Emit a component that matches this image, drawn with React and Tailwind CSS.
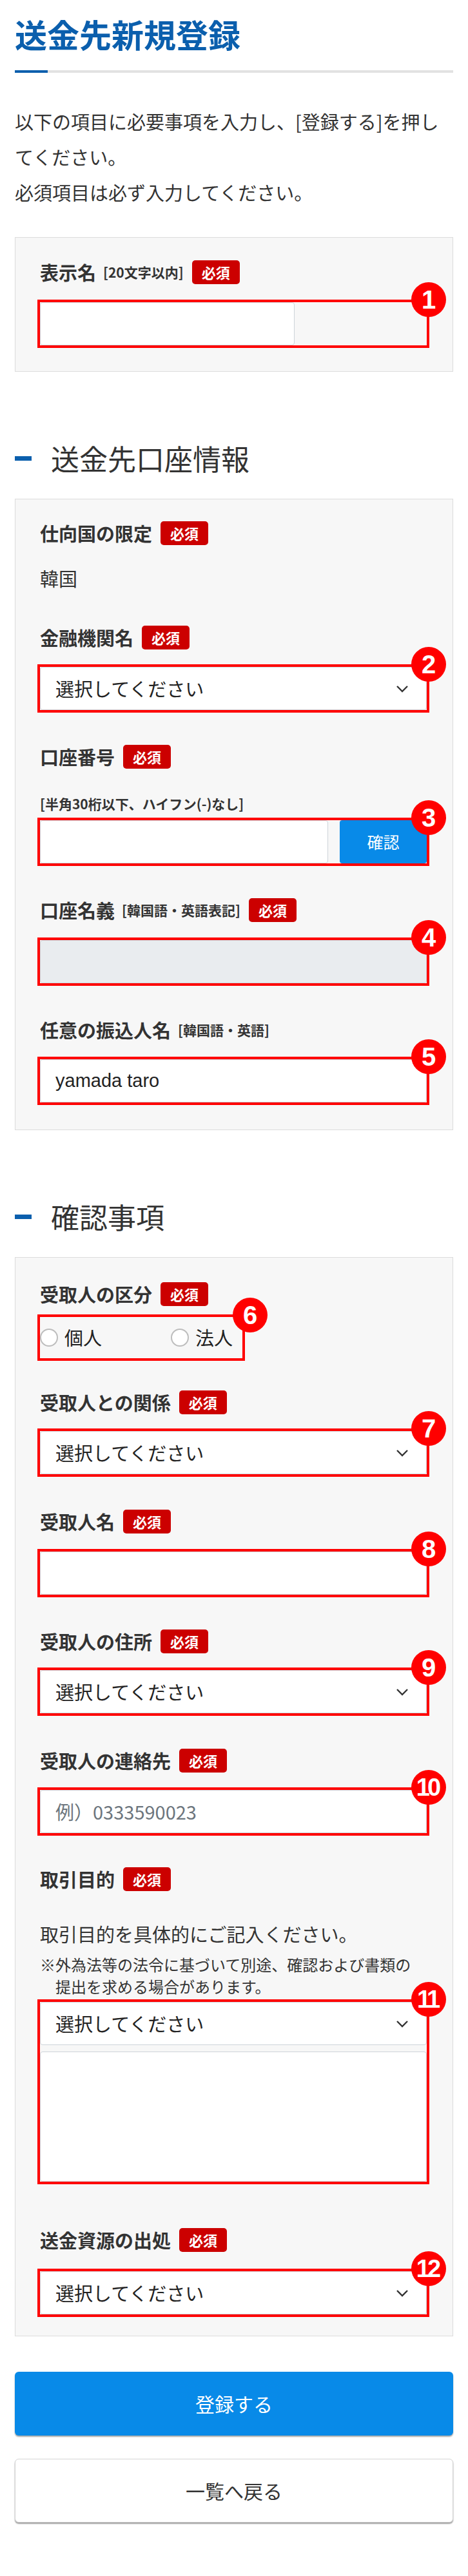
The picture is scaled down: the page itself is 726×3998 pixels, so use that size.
import React from 'react';

const BLUE = 'bg-[#0b5fad]';

const Badge = () => (
  <span className="ml-[13px] inline-flex h-[37px] w-[74px] items-center justify-center rounded-[5px] bg-[#cc0000] text-[22px] font-bold leading-none text-white">
    必須
  </span>
);

const Label = ({ children, note, required }) => (
  <div className="flex h-[40px] items-center text-[29px] font-bold leading-none text-[#333]">
    <span>{children}</span>
    {note && <span className="ml-[11px] text-[21px]">{note}</span>}
    {required && <Badge />}
  </div>
);

// red frame + numbered circle laid over a field
const Marked = ({ n, className = '', circle = '-right-[30px] -top-[31px]', children }) => (
  <div className={`relative ${className}`}>
    {children}
    <div className="pointer-events-none absolute -inset-[4px] border-[4px] border-[#ff0000]" />
    <span
      className={`absolute ${circle} flex h-[54px] w-[54px] items-center justify-center rounded-full bg-[#ff0000] font-['Liberation_Sans',sans-serif] font-bold leading-none text-white ${
        n > 9 ? 'text-[38px] tracking-[-4px] pr-[4px]' : 'text-[40px]'
      }`}
    >
      {n}
    </span>
  </div>
);

const Input = ({ value, placeholder, disabled, className = 'w-full' }) => (
  <div
    className={`flex h-[67px] items-center rounded-[4px] border border-[#ced4da] pl-[23px] text-[29px] ${
      disabled ? 'bg-[#e9ecef]' : 'bg-white'
    } ${className}`}
  >
    {value && <span className="font-['Liberation_Sans',sans-serif] text-[#222]">{value}</span>}
    {placeholder && <span className="text-[#6c757d]">{placeholder}</span>}
  </div>
);

const Select = () => (
  <div className="flex h-[67px] w-full items-center justify-between rounded-[4px] border border-[#ced4da] bg-white pl-[23px] pr-[27px] text-[29px] text-[#222]">
    <span>選択してください</span>
    <svg width="20" height="12" viewBox="0 0 20 12" fill="none">
      <path d="M2 2L10 10L18 2" stroke="#333" strokeWidth="2.4" />
    </svg>
  </div>
);

const Heading = ({ children }) => (
  <div className="mt-[104px] mb-[33px] flex h-[60px] items-center">
    <span className={`h-[7px] w-[26px] ${BLUE}`} />
    <h2 className="ml-[30px] text-[44px] font-normal leading-[60px] text-[#333]">{children}</h2>
  </div>
);

const Box = ({ className = '', children }) => (
  <div className={`border border-[#dcdcdc] bg-[#f7f7f7] pl-[38px] pr-[40px] ${className}`}>{children}</div>
);

const Radio = ({ label, className = '' }) => (
  <div className={`flex items-center ${className}`}>
    <span className="h-[28px] w-[28px] rounded-full border-2 border-[#bdbdbd] bg-white" />
    <span className="ml-[10px] text-[29px] text-[#222]">{label}</span>
  </div>
);

export default function App() {
  return (
    <div className="min-h-[3998px] bg-white px-[23px] pt-[22px] font-['Noto_Sans_CJK_JP','Noto_Sans',sans-serif] text-[#333]">
      <h1 className="text-[50px] font-bold leading-[60px] text-[#0b5fad]">送金先新規登録</h1>
      <div className="mt-[27px] flex h-[4px]">
        <div className={`w-[51px] ${BLUE}`} />
        <div className="flex-1 bg-[#e2e2e2]" />
      </div>

      <div className="mt-[48px] text-[29px] leading-[55px] text-[#333]">
        <p>
          以下の項目に必要事項を入力し、[登録する]を押し
          <br />
          てください。
        </p>
        <p>必須項目は必ず入力してください。</p>
      </div>

      <Box className="mt-[42px] pt-[33px] pb-[40px]">
        <Label note="[20文字以内]" required>表示名</Label>
        <Marked n={1} className="mt-[27px]">
          <Input className="w-[395px]" />
        </Marked>
      </Box>

      <Heading>送金先口座情報</Heading>
      <Box className="pt-[32px] pb-[42px]">
        <Label required>仕向国の限定</Label>
        <p className="mt-[30px] text-[29px] leading-[40px] text-[#333]">韓国</p>

        <div className="mt-[52px]">
          <Label required>金融機関名</Label>
          <Marked n={2} className="mt-[26px]">
            <Select />
          </Marked>
        </div>

        <div className="mt-[52px]">
          <Label required>口座番号</Label>
          <p className="mt-[39px] text-[21px] font-bold leading-[28px] text-[#333]">[半角30桁以下、ハイフン(-)なし]</p>
          <Marked n={3} className="mt-[12px]">
            <div className="flex gap-[18px]">
              <Input className="flex-1" />
              <button className="h-[67px] w-[135px] rounded-[4px] bg-[#088ae8] text-[25px] text-white">確認</button>
            </div>
          </Marked>
        </div>

        <div className="mt-[52px]">
          <Label note="[韓国語・英語表記]" required>口座名義</Label>
          <Marked n={4} className="mt-[27px]">
            <Input disabled />
          </Marked>
        </div>

        <div className="mt-[52px]">
          <Label note="[韓国語・英語]">任意の振込人名</Label>
          <Marked n={5} className="mt-[26px]">
            <Input value="yamada taro" />
          </Marked>
        </div>
      </Box>

      <Heading>確認事項</Heading>
      <Box className="pt-[36px] pb-[33px]">
        <Label required>受取人の区分</Label>
        <Marked n={6} className="mt-[16px] w-[314px]" circle="-right-[39px] -top-[30px]">
          <div className="flex h-[64px] items-center">
            <Radio label="個人" className="w-[203px]" />
            <Radio label="法人" />
          </div>
        </Marked>

        <div className="mt-[48px]">
          <Label required>受取人との関係</Label>
          <Marked n={7} className="mt-[25px]">
            <Select />
          </Marked>
        </div>

        <div className="mt-[53px]">
          <Label required>受取人名</Label>
          <Marked n={8} className="mt-[27px]">
            <Input />
          </Marked>
        </div>

        <div className="mt-[52px]">
          <Label required>受取人の住所</Label>
          <Marked n={9} className="mt-[25px]">
            <Select />
          </Marked>
        </div>

        <div className="mt-[53px]">
          <Label required>受取人の連絡先</Label>
          <Marked n={10} className="mt-[26px]">
            <Input placeholder="例）0333590023" />
          </Marked>
        </div>

        <div className="mt-[51px]">
          <Label required>取引目的</Label>
          <p className="mt-[45px] text-[29px] leading-[40px] text-[#333]">取引目的を具体的にご記入ください。</p>
          <p className="mt-[11px] pl-[24px] -indent-[24px] text-[24px] leading-[34px] text-[#333]">
            ※外為法等の法令に基づいて別途、確認および書類の
            <br />
            提出を求める場合があります。
          </p>
          <Marked n={11} className="mt-[7px]">
            <Select />
            <div className="mt-[10px] h-[202px] rounded-[4px] border border-[#ced4da] bg-white" />
          </Marked>
        </div>

        <div className="mt-[70px]">
          <Label required>送金資源の出処</Label>
          <Marked n={12} className="mt-[29px]">
            <Select />
          </Marked>
        </div>
      </Box>

      <button className="mt-[55px] flex h-[99px] w-full items-center justify-center rounded-[6px] bg-[#088ae8] text-[30px] text-white shadow-[0_2px_2px_rgba(0,0,0,0.35)]">
        登録する
      </button>
      <button className="mt-[36px] flex h-[99px] w-full items-center justify-center rounded-[6px] border border-[#d5d5d5] bg-white text-[30px] text-[#333] shadow-[0_2px_2px_rgba(0,0,0,0.4)]">
        一覧へ戻る
      </button>
    </div>
  );
}
